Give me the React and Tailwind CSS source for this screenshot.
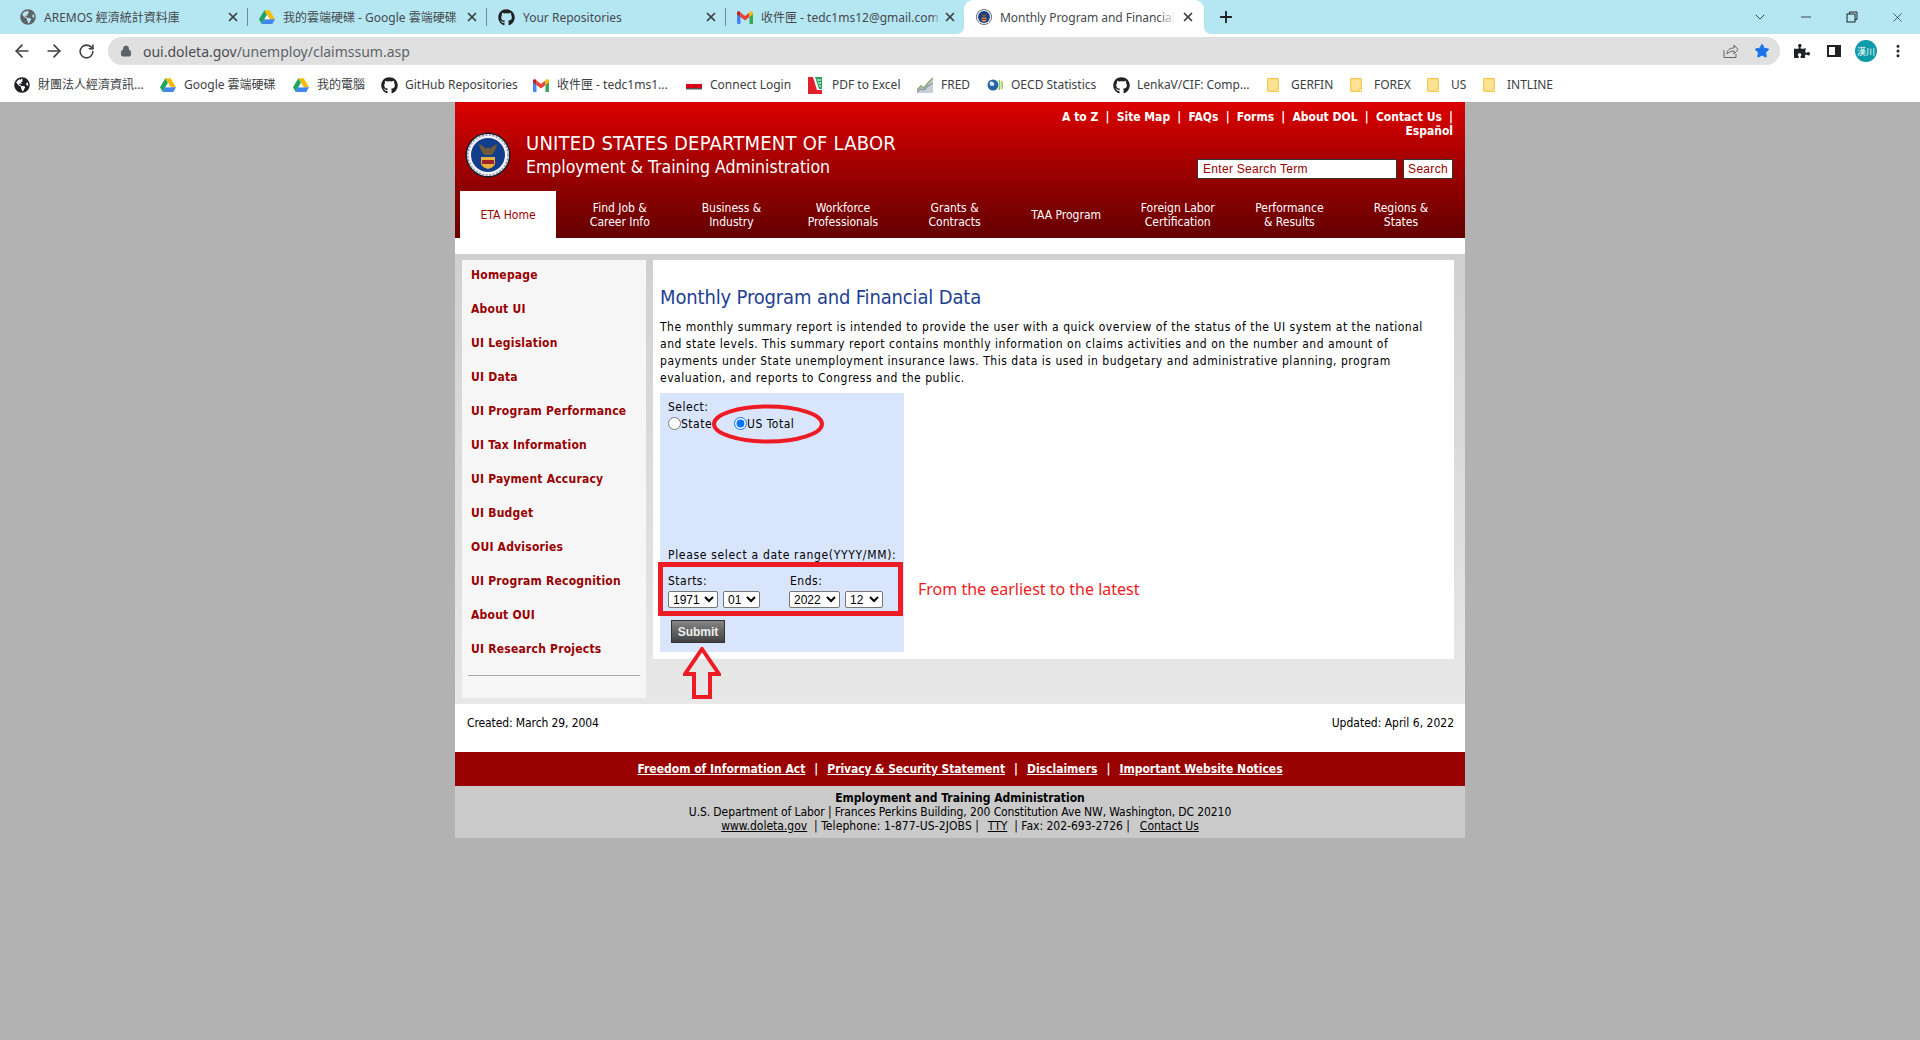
import React from "react";
import { ArrowLeft, ArrowRight, RotateCw, Lock, Star, Plus, X, ChevronDown, Minus, MoreVertical } from "lucide-react";
import { FaGithub, FaGlobeAmericas, FaPuzzlePiece } from "react-icons/fa";

const Drive = ({ s = 16 }) => (
  <svg width={s} height={s} viewBox="0 0 24 22" className="shrink-0">
    <path d="M8 1h8l8 13.5h-8z" fill="#fbbc04" />
    <path d="M8 1l4 7-8 13.5-4-7z" fill="#1fa463" />
    <path d="M4 21.5l4-7h16l-4 7z" fill="#4285f4" />
    <path d="M8 14.5h8l-4-6.5z" fill="#fff" />
  </svg>
);
const Gmail = () => (
  <svg width="16" height="13" viewBox="0 0 16 13" className="shrink-0">
    <path d="M0 2v10a1 1 0 0 0 1 1h2.5V5.5z" fill="#4285f4" />
    <path d="M16 2v10a1 1 0 0 1-1 1h-2.5V5.5z" fill="#34a853" />
    <path d="M3.5 1.5v4.5L8 9.5l4.500-3.500V1.500L8 5z" fill="#ea4335" />
    <path d="M0 2.500a1.600 1.600 0 0 1 3.500-1V6L0 3.300z" fill="#c5221f" />
    <path d="M16 2.500a1.600 1.600 0 0 0-3.500-1V6L16 3.300z" fill="#fbbc04" />
  </svg>
);
const Seal = ({ s = 46 }) => (
  <svg width={s} height={s} viewBox="0 0 46 46" className="shrink-0">
    <circle cx="23" cy="23" r="22.5" fill="#1c1c2c" />
    <circle cx="23" cy="23" r="21" fill="#f4f4f8" />
    <circle cx="23" cy="23" r="20" fill="none" stroke="#8d93a8" strokeWidth="1.500" strokeDasharray="2 1.500" />
    <circle cx="23" cy="23" r="17" fill="#123c8c" />
    <path d="M14 12c3 1 5 3 7 5l2-2 2 2c2-2 4-4 7-5-1 5-3 9-6 11h-6c-3-2-5-6-6-11z" fill="#6e5a35" />
    <path d="M16 25h14v6c0 3-3 5-7 6-4-1-7-3-7-6z" fill="#e8b13c" />
    <rect x="17" y="28" width="12" height="4" fill="#a3202a" />
  </svg>
);
const Folder = () => (
  <svg width="12" height="14" viewBox="0 0 12 14" className="shrink-0">
    <path d="M1 .7h9.500a.8.800 0 0 1 .8.800v11.800H1.500a.8.800 0 0 1-.8-.800V1.500A.8.800 0 0 1 1 .7z" fill="#fde293" stroke="#f1c84b" strokeWidth="1.200" />
    <rect x="9.500" y="10.500" width="2" height="3" fill="#fff3c4" stroke="#f1c84b" strokeWidth=".6" />
  </svg>
);
const Flag = () => (
  <svg width="16" height="12" viewBox="0 0 16 12" className="shrink-0">
    <rect width="16" height="4" y="1" fill="#f4f4f4" />
    <rect width="16" height="4" y="5" fill="#d9001b" />
    <rect width="16" height="1.500" y="9" fill="#555" />
  </svg>
);
const PdfIcon = () => (
  <svg width="14" height="17" viewBox="0 0 14 17" className="shrink-0">
    <path d="M0 0h14v17H0z" fill="#e2202c" />
    <path d="M5 0h9v13H9z" fill="#fff" />
    <path d="M7 0h7v12h-3z" fill="#2aa65a" />
    <path d="M9 3h4M10 6h3M11 9h2" stroke="#fff" strokeWidth="1" />
  </svg>
);
const Fred = () => (
  <svg width="16" height="16" viewBox="0 0 16 16" className="shrink-0">
    <path d="M0 16V12l4-3 3 1 4-5 5-4v15z" fill="#c7ced6" />
    <path d="M0 13l4-4 3 2 4-5 5-5" fill="none" stroke="#8aa870" strokeWidth="1.500" />
    <path d="M0 15l4-3 3 1 4-4 5-3" fill="none" stroke="#8a97a8" strokeWidth="1.200" />
  </svg>
);
const Oecd = () => (
  <svg width="16" height="14" viewBox="0 0 16 14" className="shrink-0">
    <circle cx="6" cy="7" r="5.500" fill="#2464a4" />
    <path d="M3 4c2-1 3 0 4 1s0 3-2 3-3-2-2-4z" fill="#d9e6f2" />
    <path d="M12 2c1 3 1 7 0 10M14.500 3c1 2.500 1 5.500 0 8" stroke="#8cbf3f" strokeWidth="1.300" fill="none" />
  </svg>
);

const bookmarks = [
  { w: "w-[146px]", icon: <FaGlobeAmericas className="text-[16px] text-[#202124] shrink-0" />, t: "財團法人經濟資訊..." },
  { w: "w-[133px]", icon: <Drive />, t: "Google 雲端硬碟" },
  { w: "w-[88px]", icon: <Drive />, t: "我的電腦" },
  { w: "w-[152px]", icon: <FaGithub className="text-[17px] text-[#202124] shrink-0" />, t: "GitHub Repositories" },
  { w: "w-[153px]", icon: <Gmail />, t: "收件匣 - tedc1ms1..." },
  { w: "w-[122px]", icon: <Flag />, t: "Connect Login" },
  { w: "w-[109px]", icon: <PdfIcon />, t: "PDF to Excel" },
  { w: "w-[70px]", icon: <Fred />, t: "FRED" },
  { w: "w-[126px]", icon: <Oecd />, t: "OECD Statistics" },
  { w: "w-[154px]", icon: <FaGithub className="text-[17px] text-[#202124] shrink-0" />, t: "LenkaV/CIF: Comp..." },
  { w: "w-[83px]", icon: <Folder />, t: "GERFIN" },
  { w: "w-[77px]", icon: <Folder />, t: "FOREX" },
  { w: "w-[56px]", icon: <Folder />, t: "US" },
  { w: "w-[90px]", icon: <Folder />, t: "INTLINE" },
];

const tabs = [
  { icon: <FaGlobeAmericas className="text-[16px] text-[#5f6368] shrink-0" />, t: "AREMOS 經濟統計資料庫" },
  { icon: <Drive />, t: "我的雲端硬碟 - Google 雲端硬碟" },
  { icon: <FaGithub className="text-[17px] text-[#202124] shrink-0" />, t: "Your Repositories" },
  { icon: <Gmail />, t: "收件匣 - tedc1ms12@gmail.com" },
];

const Tab = ({ icon, t }) => (
  <div className="w-[239px] h-[34px] flex items-center pl-[11px] pr-[8px] shrink-0 relative">
    {icon}
    <div className="relative ml-[8px] mt-[1px] w-[180px] overflow-hidden whitespace-nowrap text-[12px] text-[#45494e]">
      {t}
      <span className="absolute right-0 top-0 h-full w-[10px] bg-linear-to-r from-transparent to-[#b5e7f3]" />
    </div>
    <X size={14} strokeWidth={3} className="ml-auto text-[#3c4043] shrink-0" />
    <span className="absolute right-0 top-[8px] h-[18px] w-px bg-[#6f8a92]" />
  </div>
);

const sideItems = ["Homepage", "About UI", "UI Legislation", "UI Data", "UI Program Performance", "UI Tax Information", "UI Payment Accuracy", "UI Budget", "OUI Advisories", "UI Program Recognition", "About OUI", "UI Research Projects"];

const navItems = [["Find Job &", "Career Info"], ["Business &", "Industry"], ["Workforce", "Professionals"], ["Grants &", "Contracts"], ["TAA Program"], ["Foreign Labor", "Certification"], ["Performance", "& Results"], ["Regions &", "States"]];

const Sel = ({ v, w }) => (
  <select defaultValue={v} className={`${w} h-[17px] bg-white border border-[#767676] rounded-[2px] text-[12px] leading-none tracking-normal text-black font-['Liberation_Sans',sans-serif]`}>
    <option>{v}</option>
  </select>
);

export default function App() {
  return (
    <div className="w-[1920px] h-[1040px] overflow-hidden bg-[#b2b2b2] flex flex-col">
      {/* Browser chrome */}
      <div className="font-['Noto_Sans','Noto_Sans_CJK_TC',sans-serif]">
        <div className="h-[34px] bg-[#b5e7f3] flex items-center pl-[9px] relative">
          {tabs.map((x) => <Tab key={x.t} {...x} />)}
          <div className="w-[240px] h-[34px] bg-white rounded-t-[9px] flex items-center pl-[12px] pr-[9px] shrink-0 ml-[-1px] relative">
            <span className="absolute bottom-0 left-[-7px] w-[7px] h-[7px] bg-white"><span className="block w-full h-full bg-[#b5e7f3] rounded-br-[7px]" /></span>
            <span className="absolute bottom-0 right-[-7px] w-[7px] h-[7px] bg-white"><span className="block w-full h-full bg-[#b5e7f3] rounded-bl-[7px]" /></span>
            <Seal s={16} />
            <div className="relative ml-[8px] mt-[1px] w-[175px] overflow-hidden whitespace-nowrap text-[12px] tracking-[-0.05px] text-[#45494e]">
              Monthly Program and Financial Data
              <span className="absolute right-0 top-0 h-full w-[16px] bg-linear-to-r from-transparent to-white" />
            </div>
            <X size={14} strokeWidth={3} className="ml-auto text-[#3c4043] shrink-0" />
          </div>
          <Plus size={18} strokeWidth={2.500} className="ml-[13px] text-[#202124]" />
          <div className="ml-auto flex items-center h-full pr-[15px] text-[#202124]">
            <ChevronDown size={16} strokeWidth={1.200} />
            <Minus size={16} strokeWidth={1.200} className="ml-[30px]" />
            <svg width="12" height="12" viewBox="0 0 12 12" className="ml-[32px]" fill="none" stroke="#202124"><rect x="1" y="3" width="8" height="8" /><path d="M3.500 3V1H11v7.500H9" /></svg>
            <X size={15} strokeWidth={1.100} className="ml-[32px]" />
          </div>
        </div>
        <div className="h-[34px] bg-white flex items-center pl-[12px] text-[#3c4043]">
          <ArrowLeft size={20} strokeWidth={2} className="shrink-0" />
          <ArrowRight size={20} strokeWidth={2} className="shrink-0 ml-[12px]" />
          <RotateCw size={17} strokeWidth={2.200} className="shrink-0 ml-[14px]" />
          <div className="ml-[13px] w-[1672px] h-[28px] rounded-full bg-[#e0e0e0] flex items-center pl-[12px] pr-[10px]">
            <Lock size={12} fill="#5f6368" className="text-[#5f6368]" />
            <span className="ml-[11px] text-[14px] text-[#4a4d52]">oui.doleta.gov<span className="text-[#5f6368]">/unemploy/claimssum.asp</span></span>
            <svg width="16" height="16" viewBox="0 0 16 16" className="ml-auto" fill="none" stroke="#5f6368" strokeWidth="1"><path d="M1 7v7.500h12V11" /><path d="M4 11c0-4 3-6 7-6V2l4 4.500L11 11V8c-3 0-5 1-7 3z" /></svg>
            <Star size={16} fill="#1a73e8" strokeWidth={1.500} className="ml-[15px] text-[#1a73e8]" />
          </div>
          <FaPuzzlePiece className="ml-[14px] text-[16px] text-[#202124] shrink-0" />
          <div className="ml-[17px] w-[14px] h-[12px] border-[2.500px] border-r-[6px] border-[#202124] shrink-0" />
          <div className="ml-[14px] w-[22px] h-[22px] rounded-full bg-[#0f9aa8] text-white text-[9px] flex items-center justify-center shrink-0 leading-none">漢川</div>
          <MoreVertical size={16} strokeWidth={2.500} className="ml-[13px] text-[#202124] shrink-0" />
        </div>
        <div className="h-[34px] bg-white flex items-center pl-[14px] text-[12px] text-[#3c4043] whitespace-nowrap">
          {bookmarks.map((b) => (
            <div key={b.t} className={`${b.w} flex items-center shrink-0 h-full`}>
              <span className="w-[17px] flex items-center shrink-0">{b.icon}</span>
              <span className="ml-[7px]">{b.t}</span>
            </div>
          ))}
        </div>
      </div>

      {/* Page */}
      <div className="w-[1010px] mx-auto font-['DejaVu_Sans',sans-serif] [font-stretch:condensed] text-[12px] text-black">
        <header className="h-[136px] bg-linear-to-b from-[#dc0000] to-[#640000] flex flex-col">
          <div className="h-[89px] flex justify-between">
            <div className="flex pl-[10px] pt-[30px]">
              <Seal />
              <div className="ml-[15px] text-white">
                <div className="text-[20px] leading-[24px] mt-[-1px] tracking-[0.22px]">UNITED STATES DEPARTMENT OF LABOR</div>
                <div className="text-[17.500px] leading-[24px]">Employment &amp; Training Administration</div>
              </div>
            </div>
            <div className="pr-[12px] flex flex-col items-end">
              <div className="text-white font-bold text-[12px] leading-[14px] text-right pt-[8px]">
                <div className="flex gap-[7.200px]">
                  <span>A to Z</span><span>|</span><span>Site Map</span><span>|</span><span>FAQs</span><span>|</span><span>Forms</span><span>|</span><span>About DOL</span><span>|</span><span>Contact Us</span><span>|</span>
                </div>
                <div>Español</div>
              </div>
              <div className="flex gap-[6px] mt-[21px]">
                <div className="w-[200px] h-[20px] bg-white border border-[#333] pl-[5px] text-[#990000] leading-[18px] font-['Liberation_Sans',sans-serif] tracking-[0.3px]">Enter Search Term</div>
                <div className="w-[50px] h-[20px] bg-white border border-[#333] text-center text-[#990000] leading-[18px] font-['Liberation_Sans',sans-serif] tracking-[0.3px]">Search</div>
              </div>
            </div>
          </div>
          <nav className="h-[47px] flex pl-[5px]">
            <div className="w-[96px] h-full bg-white text-[#990000] flex items-center justify-center shrink-0">ETA Home</div>
            <div className="flex ml-[8px]">
              {navItems.map((n) => (
                <div key={n[0]} className="w-[111.600px] flex flex-col items-center justify-center text-white leading-[14px] pt-[1px]">
                  {n.map((l) => <div key={l}>{l}</div>)}
                </div>
              ))}
            </div>
          </nav>
        </header>
        <div className="h-[16px] bg-white" />
        <div className="h-[450px] bg-linear-to-b from-[#d0d0d0] to-[#e8e8e8] flex items-start pl-[7px] pt-[6px] gap-[7px]">
          <aside className="w-[184px] h-[438px] bg-[#f6f6f6] pt-[7px]">
            <div className="flex flex-col gap-[18px] pl-[9px] font-bold text-[#990000] leading-[16px] tracking-[0.22px]">
              {sideItems.map((s) => <div key={s}>{s}</div>)}
            </div>
            <div className="mt-[18px] mx-[6px] border-t border-[#aaaaaa]" />
          </aside>
          <main className="w-[801px] h-[399px] bg-white relative pl-[7px] pt-[25px]">
            <h1 className="text-[20px] leading-[24px] text-[#1d3f94] tracking-[-0.15px]">Monthly Program and Financial Data</h1>
            <p className="mt-[10px] leading-[17px] whitespace-nowrap tracking-[0.53px]">
              The monthly summary report is intended to provide the user with a quick overview of the status of the UI system at the national<br />
              and state levels. This summary report contains monthly information on claims activities and on the number and amount of<br />
              payments under State unemployment insurance laws. This data is used in budgetary and administrative planning, program<br />
              evaluation, and reports to Congress and the public.
            </p>
            <form className="mt-[6px] w-[244px] h-[259px] bg-[#d9e5fd] pl-[8px] pt-[7px] tracking-[0.5px]">
              <div className="leading-[15px]">Select:</div>
              <div className="h-[16px] flex items-center">
                <input type="radio" name="scope" className="w-[13px] h-[13px] m-0" />
                <span className="mt-[2px]">State</span>
                <input type="radio" name="scope" defaultChecked className="w-[13px] h-[13px] ml-[22px]" />
                <span className="mt-[2px]">US Total</span>
              </div>
              <div className="mt-[117px] leading-[15px] whitespace-nowrap tracking-[0.68px]">Please select a date range(YYYY/MM):</div>
              <div className="mt-[11px] flex">
                <div className="w-[121px]">
                  <div className="leading-[15px]">Starts:</div>
                  <div className="mt-[2px] flex gap-[5px]"><Sel v="1971" w="w-[50px]" /><Sel v="01" w="w-[37px]" /></div>
                </div>
                <div>
                  <div className="leading-[15px] pl-[1px]">Ends:</div>
                  <div className="mt-[2px] flex gap-[5px]"><Sel v="2022" w="w-[51px]" /><Sel v="12" w="w-[38px]" /></div>
                </div>
              </div>
              <button type="button" className="mt-[12px] ml-[3px] w-[54px] h-[23px] bg-linear-to-b from-[#858585] to-[#424242] border border-[#333] text-[#eeeeee] font-bold text-[12px] tracking-normal font-['Liberation_Sans',sans-serif]">Submit</button>
            </form>

            {/* Hand-drawn annotations over the page */}
            <svg width="114" height="42" viewBox="0 0 114 42" className="absolute left-[58px] top-[143px]" fill="none"><ellipse cx="57" cy="21" rx="54" ry="17.500" stroke="#ed1c24" strokeWidth="4" /></svg>
            <div className="absolute left-[5px] top-[302px] w-[245px] h-[54px] border-[5px] border-[#ed1c24]" />
            <div className="absolute left-[265px] top-[317px] text-[16px] leading-[24px] text-[#ed1c24] font-['Noto_Sans',sans-serif] [font-stretch:normal] whitespace-nowrap">From the earliest to the latest</div>
            <svg width="38" height="52" viewBox="0 0 38 52" className="absolute left-[30px] top-[387px]" fill="none"><path d="M19 2L36 27H27V50H11V27H2z" stroke="#ed1c24" strokeWidth="4" strokeLinejoin="miter" /></svg>
          </main>
        </div>
        <div className="h-[48px] bg-white flex justify-between px-[11px] pt-[11px] leading-[16px]">
          <span className="ml-[1px] tracking-[-0.1px]">Created: March 29, 2004</span>
          <span>Updated: April 6, 2022</span>
        </div>
        <div className="h-[34px] bg-[#990000] flex items-center justify-center gap-[9px] text-white font-bold">
          <span className="underline">Freedom of Information Act</span><span>|</span>
          <span className="underline tracking-[-0.08px]">Privacy &amp; Security Statement</span><span>|</span>
          <span className="underline">Disclaimers</span><span>|</span>
          <span className="underline">Important Website Notices</span>
        </div>
        <div className="h-[52px] bg-[#cacaca] pt-[5px] text-center leading-[14px]">
          <div className="font-bold">Employment and Training Administration</div>
          <div className="tracking-[-0.1px]">U.S. Department of Labor | Frances Perkins Building, 200 Constitution Ave NW, Washington, DC 20210</div>
          <div><span className="underline">www.doleta.gov</span> &nbsp;| <span className="tracking-[0.1px]">Telephone: 1-877-US-2JOBS</span> | &nbsp;<span className="underline ml-[2px]">TTY</span> &nbsp;| Fax: 202-693-2726 | &nbsp;<span className="underline ml-[3px]">Contact Us</span></div>
        </div>
      </div>
    </div>
  );
}
